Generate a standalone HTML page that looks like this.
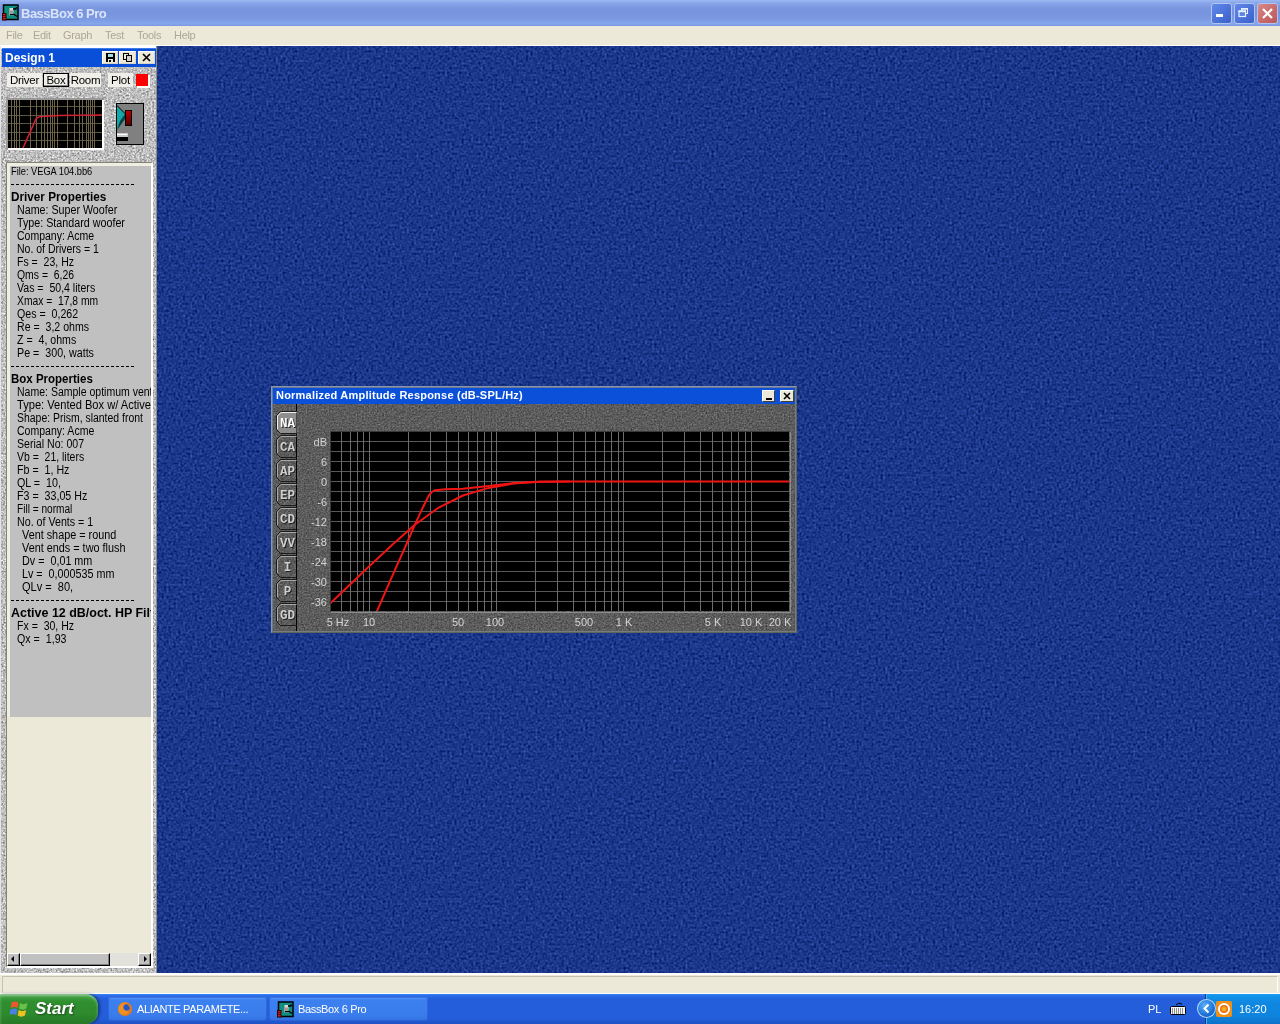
<!DOCTYPE html>
<html><head><meta charset="utf-8"><title>BassBox 6 Pro</title>
<style>
*{box-sizing:border-box;margin:0;padding:0}
html,body{width:1280px;height:1024px;overflow:hidden;background:#1b378a;font-family:"Liberation Sans",sans-serif;}
.abs{position:absolute}
#titlebar{left:0;top:0;width:1280px;height:26px;background:linear-gradient(#9cb8f2 0px,#88a6ea 3px,#7a96df 8px,#7994de 14px,#7d9ce4 20px,#86a7ec 24px,#7a96df 26px);}
#titlebar .t{left:21px;top:6px;font-size:13px;letter-spacing:-0.5px;font-weight:bold;color:#d8e4f8;white-space:nowrap}
#menubar{left:0;top:26px;width:1280px;height:20px;border-bottom:1px solid #fff;background:#ece9d8;font-size:11px;color:#aca899}
#menubar span{position:absolute;top:3px;white-space:nowrap;letter-spacing:-0.3px}
#mdi{left:0;top:46px;width:1280px;height:927px;background:#1d3a8d;overflow:hidden}
#status{left:0;top:973px;width:1280px;height:21px;background:#ece9d8;border-top:2px solid #fff;border-bottom:1px solid #fff}
#status i{position:absolute;left:2px;top:1px;width:1276px;height:17px;border:1px solid;border-color:#c5c2b0 #fff #ece9d8 #c5c2b0}
#taskbar{left:0;top:994px;width:1280px;height:30px;background:linear-gradient(#3a80f2 0px,#2a6be6 2px,#245edb 5px,#245edb 24px,#1f52c4 30px)}

.tex{position:absolute;left:0;top:0}
#panel{left:0;top:0;width:157px;height:927px;background:#b9b9b9;overflow:hidden}
#ptitle{left:2px;top:2px;width:154px;height:19px;background:#0a4fd8;border-top:1px solid #3f7be8}
#ptitle .t{left:3px;top:2px;font-size:12px;font-weight:bold;color:#fff;white-space:nowrap}
.pb{position:absolute;top:2px;height:13px;background:#ece9d8;border:1px solid;border-color:#fff #d8d4c4 #d8d4c4 #fff}
.tab{position:absolute;top:27px;height:14px;background:#efeee8;font-size:11.5px;letter-spacing:-0.25px;color:#000;line-height:15px;text-align:center;white-space:nowrap;overflow:hidden}
#cont{left:6px;top:116px;width:147px;height:806px;background:#ece9d8;border:solid;border-width:1px 2px 2px 1px;border-color:#85836e #fff #fff #85836e}
#info{left:0;top:0;width:144px;height:554px;background:#c0c0c0;border-top:3px solid #efeee2;border-left:3px solid #efeee2;overflow:hidden;font-size:11px;color:#000;white-space:nowrap}
#info div{position:absolute;left:0;margin-top:-1px;margin-left:-2px;height:13px;line-height:13px;font-size:12px;transform-origin:0 0}
#info .h{font-weight:bold;font-size:12px}
#info #L0{font-size:10.5px}
#info .sep{position:absolute;width:123px;height:1px;border-top:1px dashed #000}
#info div{white-space:pre}
#hscroll{left:0;top:790px;width:144px;height:13px;background:#e2e1dc}
.sb{position:absolute;top:0;height:13px;background:#c0c0c0;border:1px solid;border-color:#fff #000 #000 #fff;box-shadow:inset -1px -1px 0 #808080}

#gtitle{left:2px;top:2px;width:522px;height:16px;background:#0a50d8}
#gtitle .t{left:3px;top:0px;font-size:11px;font-weight:bold;color:#fff;white-space:nowrap;line-height:14px;letter-spacing:0.22px}
.gb{position:absolute;top:2px;width:13px;height:12px;background:#ece9d8;border:1px solid;border-color:#fff #404040 #404040 #fff}
.gt{position:absolute;left:4px;width:21px;height:22px;border:1px solid #2a2a2a;border-right:none;border-radius:7px 0 0 7px;box-shadow:inset 1px 1px 0 #8a8a8a;font-family:"Liberation Mono",monospace;font-weight:bold;font-size:14px;color:#c4c4c4;text-align:center;line-height:21px;letter-spacing:-1.2px;text-shadow:1px 1px 0 #222}
.gt.sel{background:#8c8c8c;color:#fff;width:22px;box-shadow:inset 1px 1px 0 #d0d0d0}
.yl{position:absolute;left:31px;margin-top:1px;width:25px;text-align:right;font-size:11px;line-height:14px;color:#d4d4d4}
.xl{position:absolute;top:229px;width:50px;text-align:center;font-size:11px;line-height:14px;color:#d4d4d4;white-space:nowrap}

.tb{position:absolute;top:3px;width:159px;height:24px;border-radius:3px;background:linear-gradient(#5a9af8 0,#3c80f0 3px,#3a7cec 18px,#3272e0 24px);box-shadow:inset 0 0 0 1px rgba(40,80,200,.5)}
.tb span{position:absolute;top:6px;font-size:11px;color:#fff;white-space:nowrap;letter-spacing:-0.35px}

.wb{position:absolute;top:3px;width:21px;height:21px;border-radius:3px;background:linear-gradient(135deg,#6088e8,#4a70d8 60%,#3c60c8);border:1px solid #b0c4f0;overflow:hidden}
#titlebar,#menubar,#mdi,#status,#taskbar{will-change:transform}
</style></head>
<body>
<div id="titlebar" class="abs"><div class="abs t">BassBox 6 Pro</div><svg class="abs" style="left:2px;top:4px" width="17" height="17"><rect x="1.5" y="1" width="14.5" height="14.5" fill="#0f8f80" stroke="#000" stroke-width="1.5"/><rect x="7.5" y="4" width="4" height="7.5" fill="#d8d8d8"/><rect x="7.5" y="6.5" width="3.5" height="2.5" fill="#b09090"/><path d="M11.5 5.5l3.5-2M11.5 10l3.5 2.5M11 5h3.5M8 10.5h3.5" stroke="#000" stroke-width="1.3" fill="none"/><rect x="0.5" y="9.5" width="3.5" height="6.5" fill="#d02020" stroke="#300" stroke-width="1"/><path d="M1 11.5h3M1 13.5h3" stroke="#400" stroke-width="0.8"/></svg>
<div class="wb" style="left:1211px"><div class="abs" style="left:4px;top:10px;width:7px;height:3px;background:#fff"></div></div>
<div class="wb" style="left:1234px"><svg width="17" height="17" style="position:absolute;left:0;top:0"><rect x="6.5" y="4.5" width="6" height="5" fill="none" stroke="#e8f0ff" stroke-width="1"/><path d="M6 5h7" stroke="#e8f0ff" stroke-width="1.5"/><rect x="4" y="7" width="6.5" height="5.5" fill="#5a80e0"/><rect x="4" y="7" width="6.5" height="5.5" fill="none" stroke="#e8f0ff" stroke-width="1.2"/><path d="M3.5 7.3h7.5" stroke="#e8f0ff" stroke-width="1.8"/></svg></div>
<div class="wb" style="left:1257px;background:linear-gradient(135deg,#d88a8a,#c86868 60%,#b85858)"><svg width="19" height="19" style="position:absolute;left:0;top:0"><path d="M5 5l9 9M14 5l-9 9" stroke="#fff" stroke-width="2.2"/></svg></div>
</div>
<div id="menubar" class="abs"><span style="left:6px">File</span><span style="left:33px">Edit</span><span style="left:63px">Graph</span><span style="left:105px">Test</span><span style="left:137px">Tools</span><span style="left:174px">Help</span></div>
<div id="mdi" class="abs">

<svg class="tex" width="1280" height="927"><defs>
<filter color-interpolation-filters="sRGB" id="fblue" x="0" y="0" width="100%" height="100%"><feTurbulence type="fractalNoise" baseFrequency="0.42" numOctaves="1" seed="5" result="n"/><feColorMatrix type="matrix" values="0.22 0.22 0 0 -0.115  0.24 0.24 0 0 -0.025  0.3 0.3 0 0 0.24  0 0 0 0 1"/></filter>
<filter color-interpolation-filters="sRGB" id="fgrey" x="0" y="0" width="100%" height="100%"><feTurbulence type="fractalNoise" baseFrequency="0.55" numOctaves="2" seed="7"/><feColorMatrix type="matrix" values="0.55 0.55 0 0 0.19  0.55 0.55 0 0 0.19  0.55 0.55 0 0 0.19  0 0 0 0 1"/></filter>
<filter color-interpolation-filters="sRGB" id="fdark" x="0" y="0" width="100%" height="100%"><feTurbulence type="fractalNoise" baseFrequency="0.6" numOctaves="2" seed="11"/><feColorMatrix type="matrix" values="0.26 0.26 0 0 0.1  0.26 0.26 0 0 0.1  0.26 0.26 0 0 0.1  0 0 0 0 1"/></filter>
</defs><rect x="157" y="0" width="1123" height="927" filter="url(#fblue)"/></svg>
<div id="panel" class="abs">
<svg class="tex" width="157" height="927"><rect width="157" height="927" filter="url(#fgrey)"/></svg>
<div class="abs" style="left:0;top:0;width:157px;height:2px;background:#fff"></div>
<div class="abs" style="left:0;top:0;width:1px;height:927px;background:#e4e4e4"></div>
<div class="abs" style="left:156px;top:0;width:1px;height:927px;background:#8a8a8a"></div>
<div id="ptitle" class="abs"><div class="abs t">Design 1</div>
<div class="pb" style="left:100px;width:16px"><svg width="14" height="11" style="position:absolute;left:0;top:0"><path d="M3 1h9v9h-9z" fill="#000"/><rect x="5" y="2" width="5" height="3" fill="#9fe0e0"/><rect x="5" y="7" width="5" height="3" fill="#ece9d8"/><rect x="6" y="8" width="2" height="2" fill="#000"/></svg></div>
<div class="pb" style="left:117px;width:17px"><svg width="15" height="11" style="position:absolute;left:0;top:0"><rect x="3.5" y="1.5" width="5" height="6" fill="#ece9d8" stroke="#000"/><rect x="6.5" y="3.5" width="5" height="6" fill="#d4d0c8" stroke="#000"/></svg></div>
<div class="pb" style="left:136px;width:17px"><svg width="15" height="11" style="position:absolute;left:0;top:0"><path d="M4 2l7 7M11 2l-7 7" stroke="#000" stroke-width="1.7" fill="none"/></svg></div>
</div>
<div class="tab" style="left:7px;width:35px">Driver</div>
<div class="tab" style="left:43px;width:26px;border:1px solid #000;line-height:12px;box-shadow:inset -1px -1px 0 #888">Box</div>
<div class="tab" style="left:70px;width:31px">Room</div>
<div class="tab" style="left:108px;width:25px">Plot</div>
<div class="abs" style="left:137px;top:29px;width:13px;height:13px;background:#fff"></div>
<div class="abs" style="left:136px;top:28px;width:12px;height:12px;background:#f00"></div>

<div class="abs" style="left:6px;top:52px;width:98px;height:52px;background:#fff;border-top:2px solid #999;border-left:2px solid #999"></div>
<svg class="abs" style="left:8px;top:54px" width="94" height="48" shape-rendering="crispEdges"><rect width="94" height="48" fill="#000"/>
<g stroke="#6e6448" stroke-width="1">
<path d="M0 6.5h94M0 15.5h94M0 23.5h94M0 32.5h94M0 40.5h94" stroke="#5c5540"/>
<path d="M3.5 0v48M6.5 0v48M8.5 0v48M11.5 0v48M22.5 0v48M28.5 0v48M33.5 0v48M36.5 0v48M39.5 0v48M42.5 0v48M44.5 0v48M46.5 0v48M49.5 0v48M59.5 0v48M66.5 0v48M71.5 0v48M74.5 0v48M78.5 0v48M80.5 0v48M82.5 0v48M84.5 0v48M86.5 0v48"/>
</g>
<path d="M15 48 L28 19 Q30 16.5 34 16.5 L50 15.5 L94 15" stroke="#d02030" stroke-width="1.6" fill="none" shape-rendering="auto"/>
</svg>
<svg class="abs" style="left:116px;top:57px" width="28" height="42"><rect x="0.5" y="0.5" width="27" height="41" fill="#808080" stroke="#000"/>
<path d="M1 3 L9 11 L9 16 L1 27z" fill="#10a8a8"/><path d="M1 27 L9 16 L9 11 L4 18z" fill="#0a4040"/><path d="M1 2.5L9.5 11" stroke="#000" stroke-width="1"/>
<defs><linearGradient id="mg" x1="0" y1="0" x2="0" y2="1"><stop offset="0" stop-color="#c00000"/><stop offset="1" stop-color="#500000"/></linearGradient></defs>
<rect x="9.5" y="7.5" width="6" height="15" fill="url(#mg)" stroke="#000"/>
<rect x="1" y="30" width="11" height="4" fill="#c8c8c8" stroke="none"/><rect x="1" y="31" width="10" height="1" fill="#fff"/><rect x="1" y="34" width="11" height="4" fill="#000"/>
</svg>

<div id="cont" class="abs"><div id="info" class="abs">
<div id="L0" style="left:3px;top:0px;transform:scaleX(0.881)">File: VEGA 104.bb6</div>
<div class="sep" style="left:3px;top:19px"></div>
<div class="h" id="L2" style="left:3px;top:26px;transform:scaleX(0.978)">Driver Properties</div>
<div id="L3" style="left:9px;top:39px;transform:scaleX(0.891)">Name: Super Woofer</div>
<div id="L4" style="left:9px;top:52px;transform:scaleX(0.894)">Type: Standard woofer</div>
<div id="L5" style="left:9px;top:65px;transform:scaleX(0.875)">Company: Acme</div>
<div id="L6" style="left:9px;top:78px;transform:scaleX(0.874)">No. of Drivers = 1</div>
<div id="L7" style="left:9px;top:91px;transform:scaleX(0.877)">Fs =  23, Hz</div>
<div id="L8" style="left:9px;top:104px;transform:scaleX(0.868)">Qms =  6,26</div>
<div id="L9" style="left:9px;top:117px;transform:scaleX(0.880)">Vas =  50,4 liters</div>
<div id="L10" style="left:9px;top:130px;transform:scaleX(0.859)">Xmax =  17,8 mm</div>
<div id="L11" style="left:9px;top:143px;transform:scaleX(0.885)">Qes =  0,262</div>
<div id="L12" style="left:9px;top:156px;transform:scaleX(0.882)">Re =  3,2 ohms</div>
<div id="L13" style="left:9px;top:169px;transform:scaleX(0.883)">Z =  4, ohms</div>
<div id="L14" style="left:9px;top:182px;transform:scaleX(0.891)">Pe =  300, watts</div>
<div class="sep" style="left:3px;top:201px"></div>
<div class="h" id="L16" style="left:3px;top:208px;transform:scaleX(0.958)">Box Properties</div>
<div id="L17" style="left:9px;top:221px;transform:scaleX(0.876)">Name: Sample optimum vent</div>
<div id="L18" style="left:9px;top:234px;transform:scaleX(0.926)">Type: Vented Box w/ Active</div>
<div id="L19" style="left:9px;top:247px;transform:scaleX(0.870)">Shape: Prism, slanted front</div>
<div id="L20" style="left:9px;top:260px;transform:scaleX(0.878)">Company: Acme</div>
<div id="L21" style="left:9px;top:273px;transform:scaleX(0.882)">Serial No: 007</div>
<div id="L22" style="left:9px;top:286px;transform:scaleX(0.871)">Vb =  21, liters</div>
<div id="L23" style="left:9px;top:299px;transform:scaleX(0.888)">Fb =  1, Hz</div>
<div id="L24" style="left:9px;top:312px;transform:scaleX(0.893)">QL =  10,</div>
<div id="L25" style="left:9px;top:325px;transform:scaleX(0.889)">F3 =  33,05 Hz</div>
<div id="L26" style="left:9px;top:338px;transform:scaleX(0.843)">Fill = normal</div>
<div id="L27" style="left:9px;top:351px;transform:scaleX(0.889)">No. of Vents = 1</div>
<div id="L28" style="left:14px;top:364px;transform:scaleX(0.903)">Vent shape = round</div>
<div id="L29" style="left:14px;top:377px;transform:scaleX(0.904)">Vent ends = two flush</div>
<div id="L30" style="left:14px;top:390px;transform:scaleX(0.897)">Dv =  0,01 mm</div>
<div id="L31" style="left:14px;top:403px;transform:scaleX(0.896)">Lv =  0,000535 mm</div>
<div id="L32" style="left:14px;top:416px;transform:scaleX(0.919)">QLv =  80,</div>
<div class="sep" style="left:3px;top:435px"></div>
<div class="h" id="L34" style="left:3px;top:442px;transform:scaleX(1.039)">Active 12 dB/oct. HP Filter</div>
<div id="L35" style="left:9px;top:455px;transform:scaleX(0.878)">Fx =  30, Hz</div>
<div id="L36" style="left:9px;top:468px;transform:scaleX(0.889)">Qx =  1,93</div>
</div>
<div id="hscroll" class="abs">
<div class="sb" style="left:0;width:13px"><svg width="11" height="10" style="position:absolute;left:0;top:0"><path d="M6 2v6l-3-3z" fill="#000"/></svg></div>
<div class="sb" style="left:13px;width:90px"></div>
<div class="sb" style="left:131px;width:13px"><svg width="12" height="10" style="position:absolute;left:0;top:0"><path d="M5 2v6l3-3z" fill="#000"/></svg></div>
</div>
</div>
</div>

<div id="gw" class="abs" style="left:271px;top:340px;width:526px;height:247px">
<svg class="tex" width="526" height="247"><rect width="526" height="247" filter="url(#fdark)"/></svg>
<div class="abs" style="left:0;top:0;width:526px;height:247px;border:1px solid;border-color:#8a96b0 #5e645e #5e645e #8a96b0"></div>
<div class="abs" style="left:1px;top:1px;width:524px;height:245px;border:1px solid;border-color:#6b7894 #767c76 #767c76 #6b7894"></div>
<div id="gtitle" class="abs"><div class="abs t">Normalized Amplitude Response (dB-SPL/Hz)</div>
<div class="gb" style="left:489px"><div class="abs" style="left:3px;top:7px;width:6px;height:2px;background:#000"></div></div>
<div class="gb" style="left:507px;width:14px"><svg width="12" height="10" style="position:absolute;left:0;top:0"><path d="M3 2l6 6M9 2l-6 6" stroke="#000" stroke-width="1.6"/></svg></div>
</div>
<div class="abs" style="left:25px;top:18px;width:1px;height:227px;background:#000"></div><svg class="abs" style="left:4px;top:24px" width="22" height="222" font-family="Liberation Mono, monospace" font-weight="bold" font-size="12.5"><path d="M21.5 1.5H5.5L1.5 5.5V19.5L5.5 23.5H21.5" fill="#8e8e8e" stroke="#1c1c1c" stroke-width="1"/><path d="M21.5 2.5H6L2.5 6V19" fill="none" stroke="#f0f0f0" stroke-width="1"/><text x="12.5" y="16.5" text-anchor="middle" fill="#222" transform="translate(1,1)">NA</text><text x="12.5" y="16.5" text-anchor="middle" fill="#ffffff">NA</text><path d="M21.5 25.5H5.5L1.5 29.5V43.5L5.5 47.5H21.5" fill="none" stroke="#1c1c1c" stroke-width="1"/><path d="M21.5 26.5H6L2.5 30V43" fill="none" stroke="#a8a8a8" stroke-width="1"/><text x="12.5" y="40.5" text-anchor="middle" fill="#222" transform="translate(1,1)">CA</text><text x="12.5" y="40.5" text-anchor="middle" fill="#cfcfcf">CA</text><path d="M21.5 49.5H5.5L1.5 53.5V67.5L5.5 71.5H21.5" fill="none" stroke="#1c1c1c" stroke-width="1"/><path d="M21.5 50.5H6L2.5 54V67" fill="none" stroke="#a8a8a8" stroke-width="1"/><text x="12.5" y="64.5" text-anchor="middle" fill="#222" transform="translate(1,1)">AP</text><text x="12.5" y="64.5" text-anchor="middle" fill="#cfcfcf">AP</text><path d="M21.5 73.5H5.5L1.5 77.5V91.5L5.5 95.5H21.5" fill="none" stroke="#1c1c1c" stroke-width="1"/><path d="M21.5 74.5H6L2.5 78V91" fill="none" stroke="#a8a8a8" stroke-width="1"/><text x="12.5" y="88.5" text-anchor="middle" fill="#222" transform="translate(1,1)">EP</text><text x="12.5" y="88.5" text-anchor="middle" fill="#cfcfcf">EP</text><path d="M21.5 97.5H5.5L1.5 101.5V115.5L5.5 119.5H21.5" fill="none" stroke="#1c1c1c" stroke-width="1"/><path d="M21.5 98.5H6L2.5 102V115" fill="none" stroke="#a8a8a8" stroke-width="1"/><text x="12.5" y="112.5" text-anchor="middle" fill="#222" transform="translate(1,1)">CD</text><text x="12.5" y="112.5" text-anchor="middle" fill="#cfcfcf">CD</text><path d="M21.5 121.5H5.5L1.5 125.5V139.5L5.5 143.5H21.5" fill="none" stroke="#1c1c1c" stroke-width="1"/><path d="M21.5 122.5H6L2.5 126V139" fill="none" stroke="#a8a8a8" stroke-width="1"/><text x="12.5" y="136.5" text-anchor="middle" fill="#222" transform="translate(1,1)">VV</text><text x="12.5" y="136.5" text-anchor="middle" fill="#cfcfcf">VV</text><path d="M21.5 145.5H5.5L1.5 149.5V163.5L5.5 167.5H21.5" fill="none" stroke="#1c1c1c" stroke-width="1"/><path d="M21.5 146.5H6L2.5 150V163" fill="none" stroke="#a8a8a8" stroke-width="1"/><text x="12.5" y="160.5" text-anchor="middle" fill="#222" transform="translate(1,1)">I</text><text x="12.5" y="160.5" text-anchor="middle" fill="#cfcfcf">I</text><path d="M21.5 169.5H5.5L1.5 173.5V187.5L5.5 191.5H21.5" fill="none" stroke="#1c1c1c" stroke-width="1"/><path d="M21.5 170.5H6L2.5 174V187" fill="none" stroke="#a8a8a8" stroke-width="1"/><text x="12.5" y="184.5" text-anchor="middle" fill="#222" transform="translate(1,1)">P</text><text x="12.5" y="184.5" text-anchor="middle" fill="#cfcfcf">P</text><path d="M21.5 193.5H5.5L1.5 197.5V211.5L5.5 215.5H21.5" fill="none" stroke="#1c1c1c" stroke-width="1"/><path d="M21.5 194.5H6L2.5 198V211" fill="none" stroke="#a8a8a8" stroke-width="1"/><text x="12.5" y="208.5" text-anchor="middle" fill="#222" transform="translate(1,1)">GD</text><text x="12.5" y="208.5" text-anchor="middle" fill="#cfcfcf">GD</text></svg>

<div class="yl" style="top:48px">dB</div><div class="yl" style="top:68px">6</div><div class="yl" style="top:88px">0</div><div class="yl" style="top:108px">-6</div><div class="yl" style="top:128px">-12</div><div class="yl" style="top:148px">-18</div><div class="yl" style="top:168px">-24</div><div class="yl" style="top:188px">-30</div><div class="yl" style="top:208px">-36</div>
<div class="xl" style="left:42px">5 Hz</div><div class="xl" style="left:73px">10</div><div class="xl" style="left:162px">50</div><div class="xl" style="left:199px">100</div><div class="xl" style="left:288px">500</div><div class="xl" style="left:328px">1 K</div><div class="xl" style="left:417px">5 K</div><div class="xl" style="left:455px">10 K</div><div class="xl" style="left:484px">20 K</div>
<div class="abs" style="left:59px;top:45px;width:461px;height:182px;border:1px solid;border-color:#3a3a3a #8c8c8c #8c8c8c #3a3a3a"></div>
<svg class="abs" style="left:60px;top:46px" width="458" height="179"><rect width="458" height="179" fill="#000"/>
<path d="M0 9.5h458M0 19.5h458M0 29.5h458M0 39.5h458M0 49.5h458M0 59.5h458M0 69.5h458M0 79.5h458M0 89.5h458M0 99.5h458M0 109.5h458M0 119.5h458M0 129.5h458M0 139.5h458M0 149.5h458M0 159.5h458M0 169.5h458" stroke="#585858" stroke-width="1" shape-rendering="crispEdges"/>
<path d="M10.5 0v179M19.5 0v179M26.5 0v179M32.5 0v179M38.5 0v179M77.5 0v179M99.5 0v179M115.5 0v179M127.5 0v179M137.5 0v179M146.5 0v179M153.5 0v179M160.5 0v179M165.5 0v179M204.5 0v179M226.5 0v179M242.5 0v179M254.5 0v179M264.5 0v179M273.5 0v179M280.5 0v179M287.5 0v179M292.5 0v179M331.5 0v179M353.5 0v179M369.5 0v179M381.5 0v179M391.5 0v179M400.5 0v179M407.5 0v179M414.5 0v179M420.5 0v179" stroke="#6c6c6c" stroke-width="1" shape-rendering="crispEdges"/>
<polyline points="-0.4,171.0 38.0,134.6 61.0,113.0 83.9,92.7 106.7,76.2 132.0,63.5 157.5,55.9 182.9,51.6 208.0,49.8 239.0,49.5 458.0,49.5" fill="none" stroke="#f01414" stroke-width="2" stroke-linejoin="round"/>
<polyline points="45.8,179.5 61.0,144.7 76.2,110.5 83.9,92.7 91.5,76.2 97.8,63.5 101.0,59.8 104.2,58.2 114.3,57.3 132.0,56.7 157.5,54.1 182.9,50.9 208.0,49.8 239.0,49.5" fill="none" stroke="#f01414" stroke-width="2" stroke-linejoin="round"/>
</svg>
</div>

</div>
<div id="status" class="abs"><i></i></div>
<div id="taskbar" class="abs">

<div class="abs" style="left:0;top:0;width:98px;height:30px;border-radius:0 12px 12px 0;background:linear-gradient(#5fae5f 0,#3c9c3c 3px,#2f8f2f 8px,#2d8a2d 20px,#267826 30px);box-shadow:inset 0 2px 3px rgba(255,255,255,.35), 2px 0 3px rgba(0,0,0,.4)"></div>
<svg class="abs" style="left:10px;top:6px" width="20" height="18"><path d="M1.5 2.5 C4 1 6 1 8.5 2.5 L7.5 8 C5 6.8 3 6.8 0.8 8z" fill="#e8582a"/><path d="M10 3 C12.5 4.5 14.5 4.5 17.5 3 L16.3 8.5 C13.5 10 11.5 10 9 8.5z" fill="#6cc04a"/><path d="M0.5 9.5 C3 8.2 5 8.2 7.2 9.5 L6.2 15 C4 13.8 2 13.8 -0.5 15z" fill="#4a80e8"/><path d="M8.7 10 C11 11.5 13.5 11.5 16 10 L15 15.5 C12.5 17 10 17 7.7 15.5z" fill="#f0c020"/></svg>
<div class="abs" style="left:35px;top:5px;font-size:17px;font-weight:bold;font-style:italic;color:#fff;text-shadow:1px 1px 2px #1a4a1a;letter-spacing:0px">Start</div>
<div class="tb" style="left:108px"><svg class="abs" style="left:9px;top:4px" width="16" height="16"><circle cx="8" cy="8" r="7" fill="#e87818"/><circle cx="8.5" cy="7.5" r="4.2" fill="#2858c8"/><path d="M1.5 6 C3 2 8 0.5 11 2.5 C8 2.5 6 4.5 6.5 7 C7 10 10.5 10.5 12 8.5 C12 12.5 8 15 4.5 13.5 C2 12 0.8 9 1.5 6z" fill="#f09020"/></svg><span style="left:29px">ALIANTE PARAMETE...</span></div>
<div class="tb" style="left:269px"><svg class="abs" style="left:8px;top:4px" width="17" height="17"><rect x="1.5" y="1" width="14.5" height="14.5" fill="#0f8f80" stroke="#000" stroke-width="1.5"/><rect x="7.5" y="4" width="4" height="7.5" fill="#d8d8d8"/><rect x="7.5" y="6.5" width="3.5" height="2.5" fill="#b09090"/><path d="M11.5 5.5l3.5-2M11.5 10l3.5 2.5M11 5h3.5M8 10.5h3.5" stroke="#000" stroke-width="1.3" fill="none"/><rect x="0.5" y="9.5" width="3.5" height="6.5" fill="#d02020" stroke="#300" stroke-width="1"/><path d="M1 11.5h3M1 13.5h3" stroke="#400" stroke-width="0.8"/></svg><span style="left:29px">BassBox 6 Pro</span></div>
<div class="abs" style="left:1205px;top:0;width:75px;height:30px;background:linear-gradient(#1a9cf0 0,#1290e8 3px,#0f86e0 10px,#0f84de 22px,#0c70c8 30px);border-left:1px solid #0a3a90;box-shadow:inset 1px 0 0 #40b0f8"></div>
<div class="abs" style="left:1148px;top:9px;font-size:11px;color:#fff">PL</div>
<svg class="abs" style="left:1170px;top:8px" width="17" height="14"><path d="M6 3 q2 -3 6 -1" stroke="#000" fill="none"/><rect x="0.5" y="4.5" width="15" height="8" rx="1" fill="#f4f4f4" stroke="#000"/><path d="M2 7h12M2 9h12M2 11h12" stroke="#333" stroke-dasharray="1 1"/></svg>
<div class="abs" style="left:1197px;top:5px;width:19px;height:19px;border-radius:50%;background:radial-gradient(circle at 40% 35%,#58b0f8,#1060d0 70%);box-shadow:0 0 0 1px #b8d8f8 inset"></div>
<svg class="abs" style="left:1197px;top:5px" width="19" height="19"><path d="M11.5 5.5L7.5 9.5L11.5 13.5" stroke="#fff" stroke-width="2" fill="none"/></svg>
<div class="abs" style="left:1216px;top:7px;width:16px;height:16px;background:#f09018;border-radius:2px"></div>
<div class="abs" style="left:1218px;top:9px;width:12px;height:12px;border-radius:50%;background:#fff"></div>
<div class="abs" style="left:1220px;top:11px;width:8px;height:8px;border-radius:50%;background:radial-gradient(#f8d020,#e03010)"></div>
<div class="abs" style="left:1239px;top:9px;font-size:11px;color:#fff">16:20</div>

</div>
</body></html>
